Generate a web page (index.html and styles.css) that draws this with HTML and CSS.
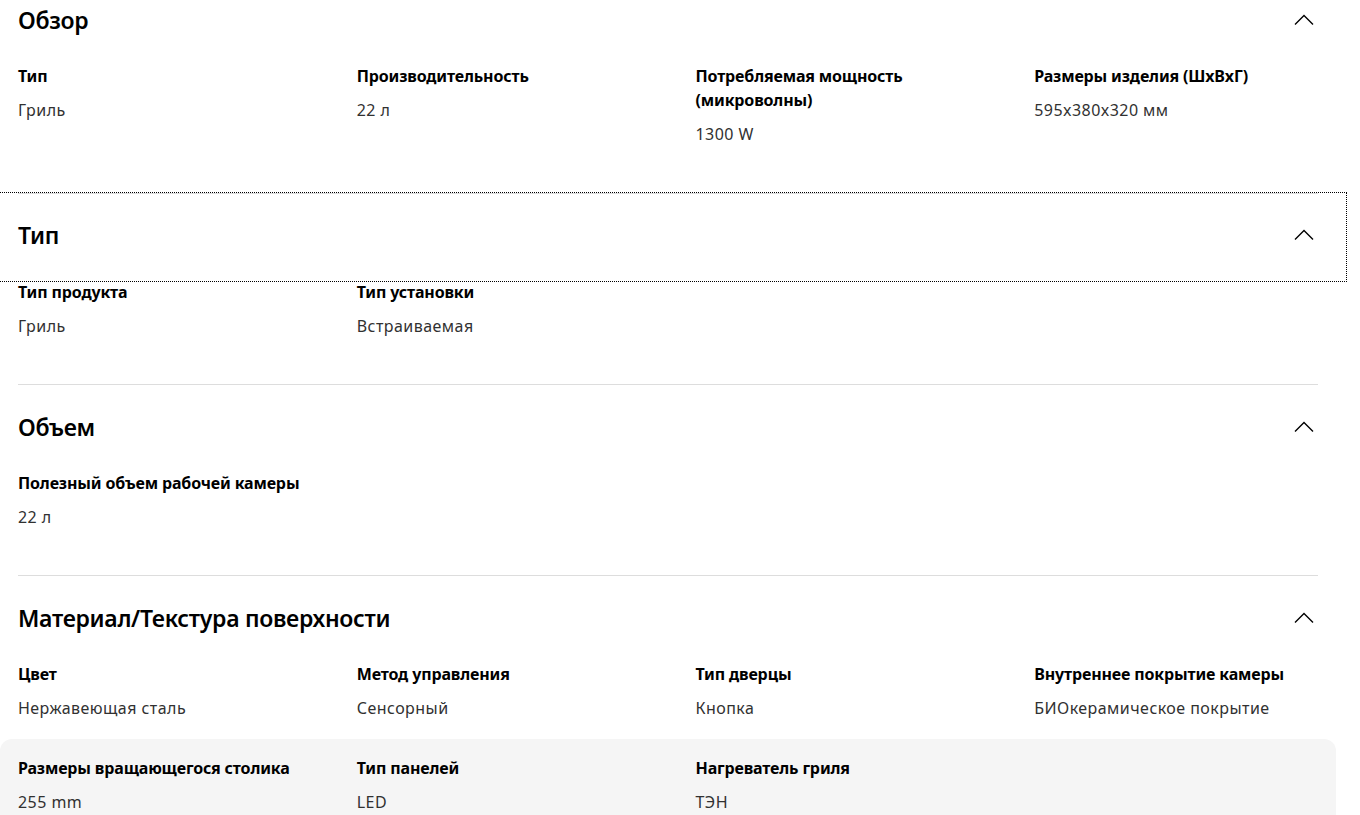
FILE: index.html
```html
<!DOCTYPE html>
<html lang="ru">
<head>
<meta charset="utf-8">
<link rel="stylesheet" href="styles.css">
</head>
<body>
<div class="page">
  <section class="spec">
    <div class="spec-head">
      <h2 class="spec-title">Обзор</h2>
      <svg class="chev" width="20" height="11" viewBox="0 0 20 11"><path d="M1 10.5 L10 1.5 L19 10.5" fill="none" stroke="#000" stroke-width="1.4"/></svg>
    </div>
    <div class="grid">
      <div class="item"><div class="label">Тип</div><div class="value">Гриль</div></div>
      <div class="item"><div class="label">Производительность</div><div class="value">22 л</div></div>
      <div class="item"><div class="label">Потребляемая мощность (микроволны)</div><div class="value">1300 W</div></div>
      <div class="item"><div class="label">Размеры изделия (ШxВxГ)</div><div class="value">595x380x320 мм</div></div>
    </div>
  </section>
  <section class="spec">
    <div class="spec-head focused">
      <h2 class="spec-title">Тип</h2>
      <svg class="chev" width="20" height="11" viewBox="0 0 20 11"><path d="M1 10.5 L10 1.5 L19 10.5" fill="none" stroke="#000" stroke-width="1.4"/></svg>
    </div>
    <div class="grid">
      <div class="item"><div class="label">Тип продукта</div><div class="value">Гриль</div></div>
      <div class="item"><div class="label">Тип установки</div><div class="value">Встраиваемая</div></div>
    </div>
  </section>
  <section class="spec">
    <div class="spec-head">
      <h2 class="spec-title">Объем</h2>
      <svg class="chev" width="20" height="11" viewBox="0 0 20 11"><path d="M1 10.5 L10 1.5 L19 10.5" fill="none" stroke="#000" stroke-width="1.4"/></svg>
    </div>
    <div class="grid">
      <div class="item"><div class="label">Полезный объем рабочей камеры</div><div class="value">22 л</div></div>
    </div>
  </section>
  <section class="spec last">
    <div class="spec-head">
      <h2 class="spec-title">Материал/Текстура поверхности</h2>
      <svg class="chev" width="20" height="11" viewBox="0 0 20 11"><path d="M1 10.5 L10 1.5 L19 10.5" fill="none" stroke="#000" stroke-width="1.4"/></svg>
    </div>
    <div class="grid">
      <div class="item"><div class="label">Цвет</div><div class="value">Нержавеющая сталь</div></div>
      <div class="item"><div class="label">Метод управления</div><div class="value">Сенсорный</div></div>
      <div class="item"><div class="label">Тип дверцы</div><div class="value">Кнопка</div></div>
      <div class="item"><div class="label">Внутреннее покрытие камеры</div><div class="value">БИОкерамическое покрытие</div></div>
    </div>
    <div class="grid hl">
      <div class="item"><div class="label">Размеры вращающегося столика</div><div class="value">255 mm</div></div>
      <div class="item"><div class="label">Тип панелей</div><div class="value">LED</div></div>
      <div class="item"><div class="label">Нагреватель гриля</div><div class="value">ТЭН</div></div>
    </div>
  </section>
</div>
</body>
</html>
```
FILE: styles.css
```css
* { box-sizing: border-box; }
html, body { margin: 0; padding: 0; background: #fff; overflow: hidden; }
body {
  font-family: "Noto Sans", "Open Sans", sans-serif;
  color: #000;
}
.page {
  width: 1300px;
  margin-left: 18px;
  margin-top: -22px;
}
.spec {
  border-bottom: 1px solid #dddddd;
  padding-bottom: 46px;
}
.spec:first-child { padding-bottom: 47px; }
.spec.last { border-bottom: none; }
.spec-head {
  height: 86px;
  display: flex;
  align-items: center;
  justify-content: space-between;
  margin: 0 -28px 0 -18px;
  padding: 0 32px 3px 18px;
}
.spec-head.focused {
  outline: 1px dotted #000;
  outline-offset: 1px;
  margin: 0 -27px 0 -17px;
  padding: 0 31px 5px 17px;
}
.spec-title {
  margin: 0;
  font-size: 23px;
  font-weight: 600;
  line-height: 32px;
  letter-spacing: -0.3px;
}
.chev { display: block; }
.grid {
  display: grid;
  grid-template-columns: repeat(4, 1fr);
  column-gap: 55px;
}
.label {
  font-size: 16px;
  font-weight: 700;
  line-height: 24px;
  letter-spacing: -0.15px;
}
.value {
  font-size: 16px;
  line-height: 24px;
  margin-top: 10px;
  color: #313131;
  letter-spacing: 0.45px;
}
.grid.hl {
  background: #f5f5f5;
  border-radius: 12px;
  margin: 19px 0 0 -18px;
  width: 1336px;
  padding: 17px 0 30px 18px;
  column-gap: 55px;
  grid-template-columns: repeat(4, 283.75px);
}
```
